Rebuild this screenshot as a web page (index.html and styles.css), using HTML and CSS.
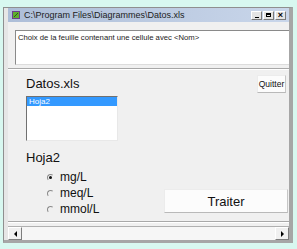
FILE: index.html
```html
<!DOCTYPE html>
<html>
<head>
<meta charset="utf-8">
<link rel="stylesheet" href="styles.css">
</head>
<body>
<div class="window">
  <div class="titlebar">
    <svg class="appicon" width="8" height="8" viewBox="0 0 8 8">
      <rect x="0" y="0" width="8" height="8" fill="#6a3f8e"/>
      <rect x="1" y="1" width="6" height="6" fill="#5fae2e"/>
      <path d="M2 6 L6 2" stroke="#2d5a14" stroke-width="1"/>
    </svg>
    <span class="title">C:\Program Files\Diagrammes\Datos.xls</span>
    <div class="tbtns">
      <span class="tbtn"><span class="g-min"></span></span>
      <span class="tbtn"><span class="g-max"></span></span>
      <span class="tbtn g-close">×</span>
    </div>
  </div>
  <div class="client">
    <div class="msg">Choix de la feuille contenant une cellule avec &lt;Nom&gt;</div>
    <div class="sep"></div>
    <div class="form">
      <div class="left">
        <div class="label">Datos.xls</div>
        <div class="listbox"><div class="item sel">Hoja2</div></div>
        <div class="label sheet">Hoja2</div>
        <div class="radios">
          <div class="radio"><span class="dot on"></span><span>mg/L</span></div>
          <div class="radio"><span class="dot"></span><span>meq/L</span></div>
          <div class="radio"><span class="dot"></span><span>mmol/L</span></div>
        </div>
      </div>
      <div class="right">
        <div class="btn quit">Quitter</div>
        <div class="btn go">Traiter</div>
      </div>
    </div>
    <div class="sep"></div>
    <div class="hscroll">
      <div class="arrow"><span class="tri-l"></span></div>
      <div class="track"></div>
      <div class="arrow"><span class="tri-r"></span></div>
    </div>
  </div>
</div>
</body>
</html>
```
FILE: styles.css
```css
html, body {
  margin: 0;
  padding: 0;
}
body {
  background: #d8f8f0;
  width: 297px;
  height: 249px;
  overflow: hidden;
  font-family: "Liberation Sans", Arial, sans-serif;
  color: #111;
}
.window {
  margin: 7px 0 0 3px;
  width: 290px;
  height: 236px;
  box-sizing: border-box;
  border: 1px solid #8f8f8f;
  border-right: 4px solid #a6a6a6;
  border-bottom: 3px solid #a6a6a6;
  background: #e6e6e6;
  padding-left: 4px;
  display: flex;
  flex-direction: column;
}
.titlebar {
  height: 14px;
  flex: none;
  display: flex;
  align-items: center;
  padding-left: 4px;
  background: linear-gradient(to right, #adbed8, #c9d6ea);
}
.appicon {
  flex: none;
  margin-right: 4px;
}
.title {
  font-size: 9px;
  color: #1c1c1c;
  white-space: nowrap;
}
.tbtns {
  margin-left: auto;
  margin-right: 3px;
  display: flex;
  gap: 1px;
}
.tbtn {
  width: 11px;
  height: 9px;
  box-sizing: border-box;
  background: #e4e4e4;
  border: 1px solid #fff;
  border-right-color: #7a7a7a;
  border-bottom-color: #7a7a7a;
  position: relative;
  display: flex;
  align-items: center;
  justify-content: center;
}
.g-min {
  width: 4px;
  height: 1px;
  background: #000;
  margin-top: 4px;
}
.g-max {
  width: 5px;
  height: 4px;
  border: 1px solid #000;
  border-top-width: 2px;
  box-sizing: border-box;
}
.g-close {
  font-size: 9px;
  line-height: 7px;
  font-weight: bold;
  color: #000;
}
.client {
  flex: 1;
  background: #f0f0f0;
  display: flex;
  flex-direction: column;
}
.msg {
  margin: 8px 0 0 7px;
  height: 35px;
  box-sizing: border-box;
  background: #fff;
  border-top: 1px solid #8a8a8a;
  border-left: 1px solid #8a8a8a;
  border-bottom: 1px solid #dcdcdc;
  padding: 1px 2px;
  font-size: 7.7px;
  line-height: 11px;
  color: #1a1a1a;
  white-space: nowrap;
}
.sep {
  margin-top: 3px;
  border-top: 1px solid #a8a8a8;
  border-bottom: 1px solid #fff;
  flex: none;
}
.form {
  height: 148px;
  display: flex;
  justify-content: space-between;
}
.left {
  padding: 6px 0 0 18px;
  display: flex;
  flex-direction: column;
  align-items: flex-start;
}
.label {
  font-size: 13px;
  line-height: 15px;
}
.listbox {
  margin-top: 5px;
  width: 92px;
  height: 45px;
  box-sizing: border-box;
  background: #fff;
  border: 1px solid #fff;
  border-top-color: #707070;
  border-left-color: #707070;
  border-right-color: #e8e8e8;
  border-bottom-color: #e8e8e8;
  padding: 0;
}
.item {
  font-size: 8px;
  line-height: 9px;
  padding-left: 2px;
}
.item.sel {
  background: #3399ff;
  color: #fff;
}
.label.sheet {
  margin-top: 9px;
}
.radios {
  margin-top: 4px;
  padding-left: 21px;
  display: flex;
  flex-direction: column;
}
.radio {
  height: 16px;
  display: flex;
  align-items: center;
  font-size: 12px;
}
.dot {
  width: 7px;
  height: 7px;
  box-sizing: border-box;
  border-radius: 50%;
  border: 1px solid #f0f0f0;
  border-top-color: #8a8a8a;
  border-left-color: #8a8a8a;
  margin-right: 6px;
  position: relative;
}
.dot.on::after {
  content: "";
  position: absolute;
  left: 1px;
  top: 1px;
  width: 3px;
  height: 3px;
  border-radius: 50%;
  background: #111;
}
.right {
  display: flex;
  flex-direction: column;
  justify-content: space-between;
  align-items: flex-end;
  padding: 5px 1px 5px 0;
}
.btn {
  box-sizing: border-box;
  background: #fcfcfc;
  border: 1px solid #ececec;
  border-right-color: #c6c6c6;
  border-bottom-color: #b9b9b9;
  display: flex;
  align-items: center;
  justify-content: center;
}
.quit {
  width: 29px;
  height: 18px;
  margin-right: 2px;
  font-size: 8.5px;
}
.go {
  width: 124px;
  height: 24px;
  font-size: 13px;
}
.hscroll {
  margin-top: 3px;
  height: 13px;
  display: flex;
  border-top: 1px solid #b0b0b0;
}
.arrow {
  width: 14px;
  box-sizing: border-box;
  background: #f0f0f0;
  border: 1px solid #fff;
  border-right-color: #7d7d7d;
  border-bottom-color: #7d7d7d;
  display: flex;
  align-items: center;
  justify-content: center;
}
.track {
  flex: 1;
  background: #f6f6f6;
}
.tri-l {
  width: 0;
  height: 0;
  border-top: 3px solid transparent;
  border-bottom: 3px solid transparent;
  border-right: 3px solid #000;
}
.tri-r {
  width: 0;
  height: 0;
  border-top: 3px solid transparent;
  border-bottom: 3px solid transparent;
  border-left: 3px solid #000;
}
```
